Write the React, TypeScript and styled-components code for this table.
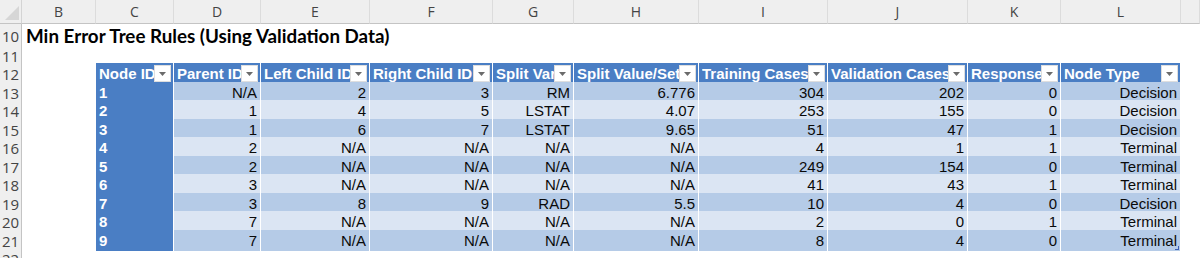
import React from 'react'
import styled, { createGlobalStyle } from 'styled-components'

const COLS = '22px 74px 78px 87px 109px 123px 81px 125px 129px 140px 93px 120px 1fr'

const GlobalStyle = createGlobalStyle`
  body {
    margin: 0;
    background: #ffffff;
  }
`

const Sheet = styled.div`
  width: 1200px;
  height: 258px;
  overflow: hidden;
  display: flex;
  flex-direction: column;
  background: #ffffff;
  font-family: 'Liberation Sans', Arial, sans-serif;
`

const SheetRow = styled.div<{ $h: number }>`
  display: grid;
  grid-template-columns: ${COLS};
  height: ${p => p.$h}px;
  flex-shrink: 0;
`

const Corner = styled.div`
  background: #efefef;
  border-right: 1px solid #d4d4d4;
  border-bottom: 1px solid #c4c4c4;
  box-sizing: border-box;
  display: flex;
  align-items: flex-end;
  justify-content: flex-end;
  padding: 0 2px 3px 0;
`

const ColHead = styled.div`
  background: #efefef;
  border-right: 1px solid #dcdcdc;
  border-bottom: 1px solid #c4c4c4;
  box-sizing: border-box;
  display: flex;
  align-items: center;
  justify-content: center;
  font-family: 'Open Sans', 'Noto Sans', sans-serif;
  font-size: 14px;
  color: #444444;
`

const RowHead = styled.div`
  background: #efefef;
  border-right: 1px solid #c4c4c4;
  border-bottom: 1px solid #e0e0e0;
  box-sizing: border-box;
  display: flex;
  align-items: center;
  justify-content: center;
  font-family: 'Open Sans', 'Noto Sans', sans-serif;
  font-size: 15px;
  color: #444444;
  padding-top: 1px;
`

const Title = styled.div`
  grid-column: 2 / 12;
  display: flex;
  align-items: center;
  padding-left: 4px;
  font-family: Lato, 'Open Sans', sans-serif;
  font-weight: 700;
  font-size: 18.8px;
  color: #000000;
  white-space: nowrap;
`

const Blank = styled.div``

const HeadCell = styled.div`
  background: #4a7ec4;
  border-right: 1px solid #ffffff;
  border-bottom: 1px solid #ffffff;
  box-sizing: border-box;
  display: flex;
  align-items: center;
  padding-left: 3px;
  overflow: hidden;
`

const HeadText = styled.span`
  flex: 1;
  min-width: 0;
  overflow: hidden;
  white-space: nowrap;
  color: #ffffff;
  font-weight: 700;
  font-size: 15px;
`

const FilterButton = styled.div`
  flex-shrink: 0;
  width: 17px;
  height: 17px;
  margin-right: 2px;
  background: #ffffff;
  border: 1px solid #dedede;
  box-sizing: border-box;
  display: flex;
  align-items: center;
  justify-content: center;
`

const DataCell = styled.div<{ $band: boolean; $first?: boolean }>`
  position: relative;
  background: ${p => (p.$first ? '#4a7ec4' : p.$band ? '#b5cbe7' : '#dbe5f3')};
  color: ${p => (p.$first ? '#ffffff' : '#0a0a0a')};
  font-weight: ${p => (p.$first ? 700 : 400)};
  justify-content: ${p => (p.$first ? 'flex-start' : 'flex-end')};
  border-right: 1px solid #ffffff;
  border-bottom: 1px solid #ffffff;
  box-sizing: border-box;
  display: flex;
  align-items: center;
  padding: 0 3px;
  font-size: 15px;
  white-space: nowrap;
  overflow: hidden;
`

const ResizeHandle = styled.span`
  position: absolute;
  right: 1px;
  bottom: 1px;
  width: 3px;
  height: 3px;
  border-right: 1px solid #3b5fb5;
  border-bottom: 1px solid #3b5fb5;
`

const letters = ['B', 'C', 'D', 'E', 'F', 'G', 'H', 'I', 'J', 'K', 'L', '']

const headers = [
  'Node ID',
  'Parent ID',
  'Left Child ID',
  'Right Child ID',
  'Split Var',
  'Split Value/Set',
  'Training Cases',
  'Validation Cases',
  'Response',
  'Node Type',
]

const rows: string[][] = [
  ['1', 'N/A', '2', '3', 'RM', '6.776', '304', '202', '0', 'Decision'],
  ['2', '1', '4', '5', 'LSTAT', '4.07', '253', '155', '0', 'Decision'],
  ['3', '1', '6', '7', 'LSTAT', '9.65', '51', '47', '1', 'Decision'],
  ['4', '2', 'N/A', 'N/A', 'N/A', 'N/A', '4', '1', '1', 'Terminal'],
  ['5', '2', 'N/A', 'N/A', 'N/A', 'N/A', '249', '154', '0', 'Terminal'],
  ['6', '3', 'N/A', 'N/A', 'N/A', 'N/A', '41', '43', '1', 'Terminal'],
  ['7', '3', '8', '9', 'RAD', '5.5', '10', '4', '0', 'Decision'],
  ['8', '7', 'N/A', 'N/A', 'N/A', 'N/A', '2', '0', '1', 'Terminal'],
  ['9', '7', 'N/A', 'N/A', 'N/A', 'N/A', '8', '4', '0', 'Terminal'],
]

const DropArrow = () => (
  <svg width="7" height="4" viewBox="0 0 7 4">
    <polygon points="0,0 7,0 3.5,4" fill="#6b6b6b" />
  </svg>
)

const App: React.FC = () => {
  return (
    <>
      <GlobalStyle />
      <Sheet>
        <SheetRow $h={24}>
          <Corner>
            <svg width="14" height="14" viewBox="0 0 14 14">
              <polygon points="14,0 14,14 0,14" fill="#d6d6d6" />
            </svg>
          </Corner>
          {letters.map((l, i) => (
            <ColHead key={i}>{l}</ColHead>
          ))}
        </SheetRow>

        <SheetRow $h={20.5}>
          <RowHead>10</RowHead>
          <Title>Min Error Tree Rules (Using Validation Data)</Title>
        </SheetRow>

        <SheetRow $h={18.5}>
          <RowHead>11</RowHead>
          <Blank />
        </SheetRow>

        <SheetRow $h={18.5}>
          <RowHead>12</RowHead>
          <Blank />
          {headers.map(h => (
            <HeadCell key={h}>
              <HeadText>{h}</HeadText>
              <FilterButton>
                <DropArrow />
              </FilterButton>
            </HeadCell>
          ))}
        </SheetRow>

        {rows.map((r, ri) => (
          <SheetRow $h={18.5} key={ri}>
            <RowHead>{13 + ri}</RowHead>
            <Blank />
            {r.map((v, ci) => (
              <DataCell key={ci} $band={ri % 2 === 0} $first={ci === 0}>
                {v}
                {ri === rows.length - 1 && ci === r.length - 1 && <ResizeHandle />}
              </DataCell>
            ))}
          </SheetRow>
        ))}

        <SheetRow $h={18.5}>
          <RowHead>22</RowHead>
          <Blank />
        </SheetRow>
      </Sheet>
    </>
  )
}

export default App
